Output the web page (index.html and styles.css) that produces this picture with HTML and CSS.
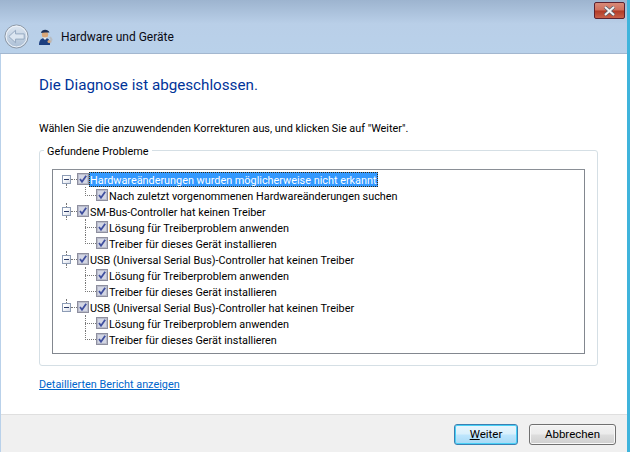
FILE: index.html
```html
<!DOCTYPE html>
<html lang="de">
<head>
  <meta charset="UTF-8">
  <title>Hardware und Geräte</title>
  <link rel="stylesheet" href="styles.css">
</head>
<body>
  <svg class="defs" width="0" height="0">
    <symbol id="check" viewBox="0 0 12 12">
      <rect x="0.5" y="0.5" width="11" height="11" fill="#fff" stroke="#8e8f9f"/>
      <rect x="1.5" y="1.5" width="9" height="9" fill="#d3d6e4" stroke="#b9bccb"/>
      <path d="M3 6 L5 8.8 L9.2 2.8" fill="none" stroke="#3f4f9e" stroke-width="1.8"/>
    </symbol>
  </svg>

  <div class="window">
    <div class="titlebar">
      <div class="close">
        <svg width="15" height="10" viewBox="0 0 15 10">
          <path d="M3 1 L12 9 M12 1 L3 9" stroke="#5a5f6a" stroke-width="3.6"/>
          <path d="M3 1 L12 9 M12 1 L3 9" stroke="#f4f4f6" stroke-width="2"/>
        </svg>
      </div>
      <div class="nav">
        <svg class="back" width="25" height="25" viewBox="0 0 26 26">
          <defs>
            <linearGradient id="backfill" x1="0" y1="0" x2="0" y2="1">
              <stop offset="0" stop-color="#dfe8f2"/>
              <stop offset="1" stop-color="#a9bdd4"/>
            </linearGradient>
          </defs>
          <circle cx="13" cy="13" r="12" fill="url(#backfill)" stroke="#8d97a3"/>
          <circle cx="13" cy="13" r="10.8" fill="none" stroke="#eef3f8"/>
          <path d="M5 13 L12 6.5 V10.3 H21 V15.7 H12 V19.5 Z" fill="#dce6f1" stroke="#94a8bf"/>
        </svg>
        <svg class="tech" width="14" height="16" viewBox="0 0 14 16">
          <path d="M0 16 C0 10 3 9 6 9 C9 9 11 10 11 16 Z" fill="#1c3f80"/>
          <circle cx="6" cy="5.5" r="3.2" fill="#d9a679"/>
          <path d="M2 4 C2.5 0 9 -0.5 10.5 3.5 L6 3.5 Z" fill="#1d2f58"/>
          <path d="M3.5 8.5 L6 11 L8.5 8.5 Z" fill="#e8e8e8"/>
          <path d="M11 8 L12.5 10.5 L11 14" fill="none" stroke="#b8bcc2" stroke-width="2"/>
          <circle cx="10" cy="12.5" r="1.5" fill="#d9a679"/>
        </svg>
        <span class="app-title">Hardware und Geräte</span>
      </div>
    </div>

    <div class="content">
      <h1>Die Diagnose ist abgeschlossen.</h1>
      <p class="intro">Wählen Sie die anzuwendenden Korrekturen aus, und klicken Sie auf "Weiter".</p>

      <fieldset class="group">
        <legend>Gefundene Probleme</legend>
        <div class="tree">
          <div class="node parent first">
            <span class="expander"></span>
            <svg class="cb"><use href="#check"/></svg>
            <span class="label selected">Hardwareänderungen wurden möglicherweise nicht erkannt</span>
          </div>
          <div class="node child only">
            <svg class="cb"><use href="#check"/></svg>
            <span class="label">Nach zuletzt vorgenommenen Hardwareänderungen suchen</span>
          </div>

          <div class="node parent">
            <span class="expander"></span>
            <svg class="cb"><use href="#check"/></svg>
            <span class="label">SM-Bus-Controller hat keinen Treiber</span>
          </div>
          <div class="node child">
            <svg class="cb"><use href="#check"/></svg>
            <span class="label">Lösung für Treiberproblem anwenden</span>
          </div>
          <div class="node child last">
            <svg class="cb"><use href="#check"/></svg>
            <span class="label">Treiber für dieses Gerät installieren</span>
          </div>

          <div class="node parent">
            <span class="expander"></span>
            <svg class="cb"><use href="#check"/></svg>
            <span class="label">USB (Universal Serial Bus)-Controller hat keinen Treiber</span>
          </div>
          <div class="node child">
            <svg class="cb"><use href="#check"/></svg>
            <span class="label">Lösung für Treiberproblem anwenden</span>
          </div>
          <div class="node child last">
            <svg class="cb"><use href="#check"/></svg>
            <span class="label">Treiber für dieses Gerät installieren</span>
          </div>

          <div class="node parent end">
            <span class="expander"></span>
            <svg class="cb"><use href="#check"/></svg>
            <span class="label">USB (Universal Serial Bus)-Controller hat keinen Treiber</span>
          </div>
          <div class="node child nospine">
            <svg class="cb"><use href="#check"/></svg>
            <span class="label">Lösung für Treiberproblem anwenden</span>
          </div>
          <div class="node child last nospine">
            <svg class="cb"><use href="#check"/></svg>
            <span class="label">Treiber für dieses Gerät installieren</span>
          </div>
        </div>
      </fieldset>

      <a class="report" href="#">Detaillierten Bericht anzeigen</a>
    </div>

    <div class="footer">
      <button class="btn primary"><u>W</u>eiter</button>
      <button class="btn">Abbrechen</button>
    </div>
  </div>
</body>
</html>
```

FILE: styles.css
```css
* {
  box-sizing: border-box;
}

body {
  margin: 0;
  background: #fff;
  font-family: "Roboto", "Noto Sans", sans-serif;
  font-size: 10.85px;
  color: #000;
}

.defs {
  position: absolute;
}

.window {
  width: 630px;
  height: 452px;
  display: flex;
  flex-direction: column;
  background: #b9d1ea;
  border-right: 3px solid #3fb4dc;
}

.titlebar {
  height: 54px;
  background: linear-gradient(180deg, #9db4cf 0%, #b9cfe8 45%, #b9d1ea 100%);
  border-bottom: 1px solid #a3b7cf;
  position: relative;
}

.close {
  position: absolute;
  top: 2px;
  right: 2px;
  width: 31px;
  height: 17px;
  display: flex;
  align-items: center;
  justify-content: center;
  border: 1px solid #5c2230;
  border-radius: 2px;
  background: linear-gradient(180deg, #d88a78 0%, #cf6f5c 48%, #b13a26 52%, #c8604a 100%);
}

.nav {
  display: flex;
  align-items: center;
  padding: 24px 0 0 4px;
}

.tech {
  margin-left: 10px;
}

.app-title {
  margin-left: 8px;
  font-size: 12px;
  color: #0a0a14;
}

.content {
  flex: 1;
  margin-left: 1px;
  background: #fff;
  padding: 20px 29px 0 38px;
}

h1 {
  margin: 0;
  font-size: 15.2px;
  font-weight: 400;
  line-height: 22px;
  color: #003399;
}

.intro {
  margin: 25px 0 0;
  line-height: 16px;
}

.group {
  margin: 4px 0 0;
  padding: 10px 12px 10px 12px;
  border: 1px solid #d5dfe5;
  border-radius: 3px;
  height: 225px;
}

.group legend {
  padding: 4px 3px 0;
  margin-left: -8px;
  line-height: 14px;
}

.tree {
  height: 185px;
  border: 1px solid #82878f;
  border-top-color: #8a8f96;
  padding-top: 1px;
  background: #fff;
}

.node {
  height: 16px;
  display: flex;
  align-items: center;
  position: relative;
  white-space: nowrap;
}

.parent {
  padding-left: 24px;
}

.child {
  padding-left: 43px;
}

.cb {
  width: 12px;
  height: 12px;
  flex: none;
}

.label {
  padding: 2px 1px 0;
  line-height: 13px;
}

.selected {
  background: #3399ff;
  color: #fff;
  outline: 1px dotted #3a2a10;
  outline-offset: -1px;
}

.expander {
  position: absolute;
  left: 9px;
  top: 4px;
  width: 9px;
  height: 9px;
  border: 1px solid #8d9cb5;
  background: linear-gradient(135deg, #fff 30%, #d5dbe8 100%);
}

.expander::before {
  content: "";
  position: absolute;
  left: 1px;
  top: 3px;
  width: 5px;
  height: 1px;
  background: #2a3a66;
}

/* dotted connectors of the tree */
.parent::before {
  content: "";
  position: absolute;
  left: 18px;
  top: 8px;
  width: 6px;
  border-top: 1px dotted #777;
}

.parent::after {
  content: "";
  position: absolute;
  left: 13px;
  top: 13px;
  height: 4px;
  border-left: 1px dotted #777;
}

.parent.end::after {
  display: none;
}

.parent:not(.first) .expander::after {
  content: "";
  position: absolute;
  left: 3px;
  top: -5px;
  height: 4px;
  border-left: 1px dotted #777;
}

.child::before {
  content: "";
  position: absolute;
  left: 32px;
  top: 8px;
  width: 11px;
  border-top: 1px dotted #777;
}

.child::after {
  content: "";
  position: absolute;
  left: 32px;
  top: 0;
  height: 16px;
  border-left: 1px dotted #777;
}

.child.only::after,
.child.last::after {
  height: 9px;
}

.child:not(.nospine) {
  background: radial-gradient(circle, #777 0.5px, transparent 0.6px) 13px 0 / 2px 2px repeat-y;
}

.report {
  display: block;
  width: max-content;
  margin-top: 11px;
  line-height: 16px;
  color: #0066cc;
}

.footer {
  height: 38px;
  margin-left: 1px;
  background: #f0f0f0;
  border-top: 1px solid #dfdfdf;
  display: flex;
  justify-content: flex-end;
  align-items: flex-start;
  gap: 11px;
  padding: 9px 11px 0 0;
}

.btn {
  height: 21px;
  width: 87px;
  padding: 0;
  font: inherit;
  font-size: 11.5px;
  line-height: 17px;
  color: #000;
  border: 1px solid #707070;
  border-radius: 3px;
  background: linear-gradient(180deg, #f2f2f2 0%, #ebebeb 48%, #dddddd 52%, #cfcfcf 100%);
  box-shadow: inset 0 0 0 1px #f8f8f8;
}

.primary {
  width: 64px;
  border-color: #3c7fb1;
  background: linear-gradient(180deg, #eaf6fd 0%, #d9f0fc 48%, #bee6fd 52%, #a7d9f5 100%);
  box-shadow: inset 0 0 0 1px #48d0f6;
}
```
